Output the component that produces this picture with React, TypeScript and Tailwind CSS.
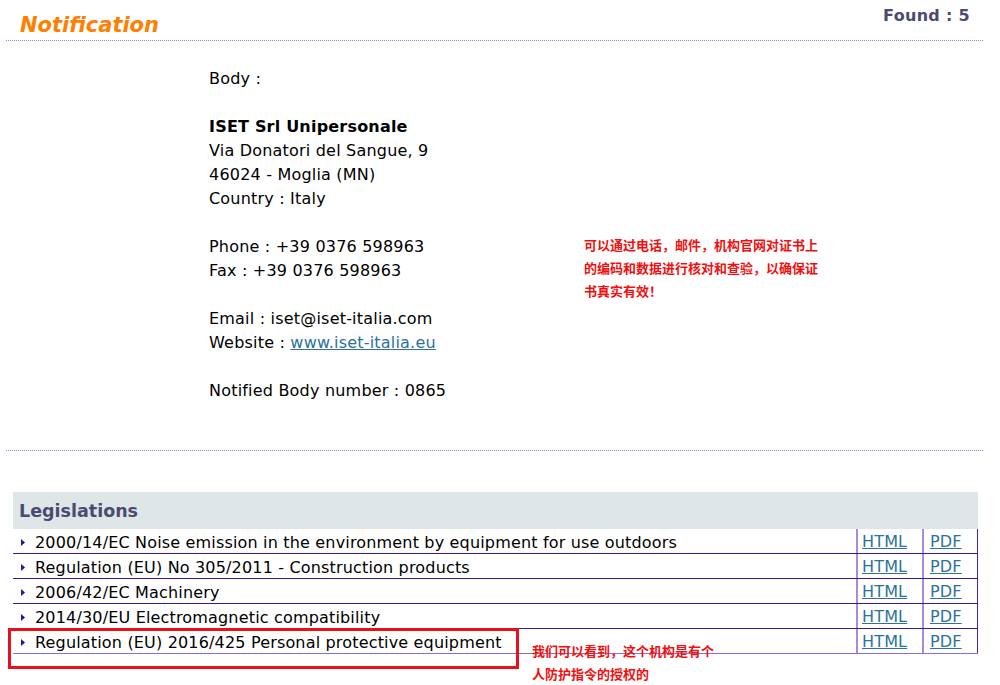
import React from 'react';

type Law = { title: string };

const laws: Law[] = [
  { title: '2000/14/EC Noise emission in the environment by equipment for use outdoors' },
  { title: 'Regulation (EU) No 305/2011 - Construction products' },
  { title: '2006/42/EC Machinery' },
  { title: '2014/30/EU Electromagnetic compatibility' },
  { title: 'Regulation (EU) 2016/425 Personal protective equipment' },
];

function Bullet() {
  return (
    <svg width="4" height="7" viewBox="0 0 4 7" className="shrink-0">
      <path d="M0 0 L4 3.5 L0 7 Z" fill="#1c1c8c" />
    </svg>
  );
}

export default function App() {
  return (
    <div className="relative h-[685px] w-[1000px] overflow-hidden bg-white font-['DejaVu_Sans','Liberation_Sans',sans-serif] text-black">
      <div className="ml-[6px] w-[977px]">
        {/* header */}
        <div className="flex h-[41px] items-start justify-between border-b border-dotted border-[#8f7fcf] pl-[14px] pr-[13px]">
          <span className="pt-[12px] text-[21px] leading-[26px] font-bold italic text-[#ff8000]">
            Notification
          </span>
          <span className="pt-[5px] text-[16px] leading-[22px] font-bold tracking-[0.3px] text-[#4b4b72]">
            Found : 5
          </span>
        </div>

        {/* body */}
        <div className="border-b border-dotted border-[#8f7fcf] pb-[47px] pl-[203px] pt-[26px] text-[16px] leading-[24px] tracking-[0.2px]">
          <div>Body :</div>
          <div className="h-[24px]" />
          <div className="font-bold">ISET Srl Unipersonale</div>
          <div>Via Donatori del Sangue, 9</div>
          <div>46024 - Moglia (MN)</div>
          <div>Country : Italy</div>
          <div className="h-[24px]" />
          <div>Phone : +39 0376 598963</div>
          <div>Fax : +39 0376 598963</div>
          <div className="h-[24px]" />
          <div>Email : iset@iset-italia.com</div>
          <div>
            Website :{' '}
            <a href="#" className="text-[#2b7399] underline">
              www.iset-italia.eu
            </a>
          </div>
          <div className="h-[24px]" />
          <div>Notified Body number : 0865</div>
        </div>

        {/* legislations */}
        <div className="ml-[7px] mt-[41px] w-[965px]">
          <div className="flex h-[37px] items-center bg-[#dfe6e8] pl-[6px] pt-[2px] text-[17.5px] font-bold text-[#4b4b72]">
            Legislations
          </div>
          {laws.map((law, i) => (
            <div
              key={law.title}
              className={`flex h-[25px] border-b ${i === laws.length - 1 ? 'border-[#8a6fd0]' : 'border-[#3b1a9e]'} text-[16px] leading-[20px] tracking-[0.17px]`}
            >
              <div className="flex flex-1 items-center gap-[10px] pl-[8px] pt-[3px]">
                <Bullet />
                <span>{law.title}</span>
              </div>
              <div className="w-[66px] border-l-2 border-[#a98bd8] pl-[4px] pt-[3px]">
                <a href="#" className="text-[#2b7399] underline">
                  HTML
                </a>
              </div>
              <div className="w-[56px] border-l-2 border-r border-l-[#a98bd8] border-r-[#4a22b0] pl-[6px] pt-[3px]">
                <a href="#" className="text-[#2b7399] underline">
                  PDF
                </a>
              </div>
            </div>
          ))}
        </div>
      </div>

      {/* annotations */}
      <div className="absolute left-[584px] top-[233px] w-[240px] font-['Noto_Sans_CJK_SC',sans-serif] text-[13px] leading-[23px] font-bold text-[#f01010]">
        可以通过电话，邮件，机构官网对证书上的编码和数据进行核对和查验，以确保证书真实有效！
      </div>
      <div className="absolute left-[8px] top-[628px] h-[41px] w-[511px] border-[3px] border-[#e8101a]" />
      <div className="absolute left-[532px] top-[639px] w-[190px] font-['Noto_Sans_CJK_SC',sans-serif] text-[13px] leading-[23px] font-bold text-[#f01010]">
        我们可以看到，这个机构是有个人防护指令的授权的
      </div>
    </div>
  );
}
